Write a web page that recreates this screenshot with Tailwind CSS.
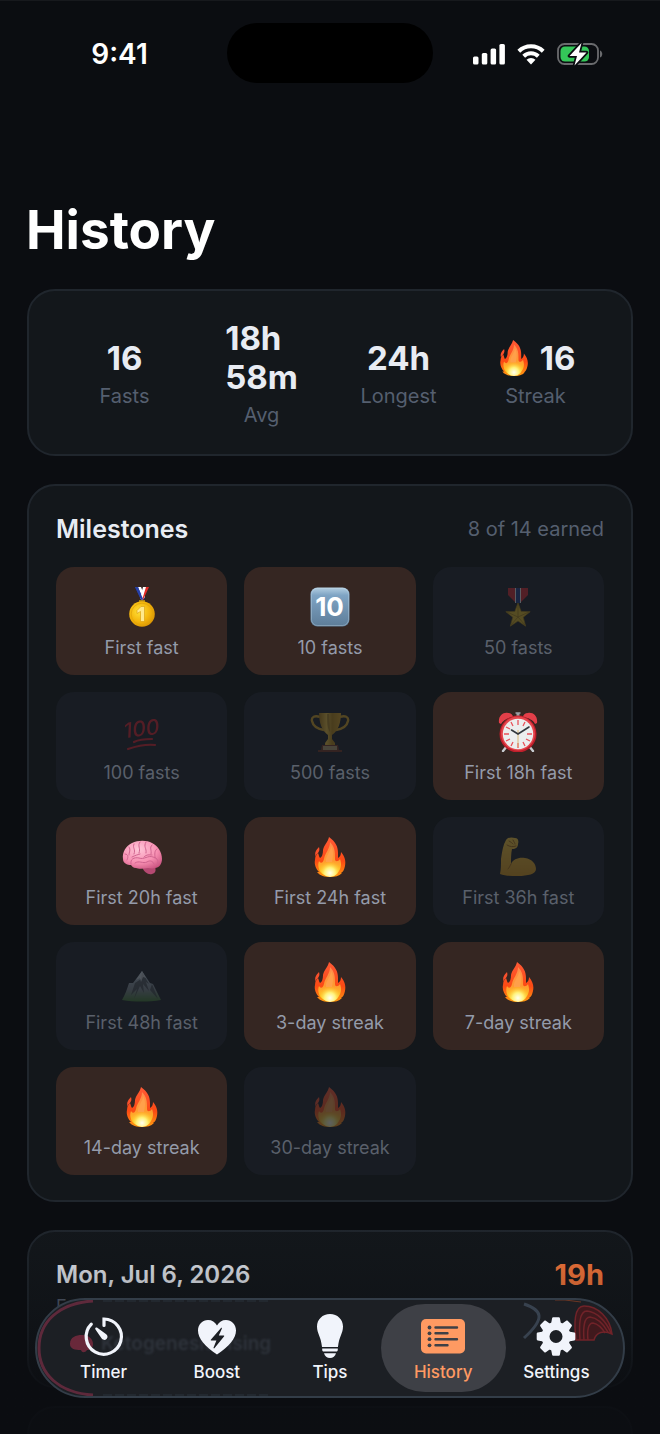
<!DOCTYPE html>
<html lang="en">
<head>
    <meta charset="UTF-8">
    <meta name="viewport" content="width=device-width, initial-scale=1.0">
    <title>History</title>
    <script src="https://cdn.jsdelivr.net/npm/@tailwindcss/browser@4"></script>
</head>
<body class="bg-[#0b0d11] font-['Inter',sans-serif] text-[#e8ecf3]">

    <!-- Shared artwork -->
    <svg class="absolute size-0" aria-hidden="true">
        <defs>
            <linearGradient id="flame-outer" x1="0" y1="0" x2="0" y2="1">
                <stop offset="0" stop-color="#ff5a36"/><stop offset=".6" stop-color="#fb4a14"/><stop offset="1" stop-color="#ff9a10"/>
            </linearGradient>
            <linearGradient id="flame-mid" x1="0" y1="0" x2="0" y2="1">
                <stop offset="0" stop-color="#ff8a50"/><stop offset=".55" stop-color="#ff9a30"/><stop offset="1" stop-color="#ffd51c"/>
            </linearGradient>
            <radialGradient id="flame-core" cx=".5" cy=".8" r=".6">
                <stop offset="0" stop-color="#fffff0"/><stop offset=".45" stop-color="#fff27a"/><stop offset="1" stop-color="#ffc21f" stop-opacity="0"/>
            </radialGradient>
            <radialGradient id="gold" cx=".4" cy=".4" r=".65">
                <stop offset="0" stop-color="#ffe23a"/><stop offset=".6" stop-color="#f4b60c"/><stop offset="1" stop-color="#d99303"/>
            </radialGradient>
            <linearGradient id="keycap" x1="0" y1="0" x2="0" y2="1">
                <stop offset="0" stop-color="#b4cfe2"/><stop offset=".2" stop-color="#7fa4c4"/><stop offset="1" stop-color="#5d7c98"/>
            </linearGradient>
            <linearGradient id="cup" x1="0" y1="0" x2="1" y2="0">
                <stop offset="0" stop-color="#a8770c"/><stop offset=".35" stop-color="#f2c53c"/><stop offset=".6" stop-color="#b98710"/><stop offset="1" stop-color="#e0a820"/>
            </linearGradient>
            <radialGradient id="brain-fill" cx=".4" cy=".3" r=".8">
                <stop offset="0" stop-color="#ffc6d8"/><stop offset=".6" stop-color="#f78fb2"/><stop offset="1" stop-color="#c9527f"/>
            </radialGradient>
            <linearGradient id="arm-fill" x1="0" y1="0" x2="0" y2="1">
                <stop offset="0" stop-color="#ffcf3c"/><stop offset="1" stop-color="#dd9a18"/>
            </linearGradient>
            <linearGradient id="rock" x1="0" y1="0" x2="0" y2="1">
                <stop offset="0" stop-color="#a9bccb"/><stop offset=".6" stop-color="#7f8a92"/><stop offset="1" stop-color="#3f7a2f"/>
            </linearGradient>
        </defs>

        <symbol id="flame" viewBox="0 0 40 40">
            <path fill="url(#flame-outer)" d="M19 0c7 5 9 10 9 16 0 2 0 4 0 5 2-1 3-3 3-6 4 5 5 9 4 14-1 4-2 6-4 7l1 0c-3 3-7 4-12 4s-10-1-13-5l2 0c-3-3-5-8-4-12 0-4 2-6 3-7 1 2 1 4 2 5 2-1 3-4 3-8 1-5 5-8 6-13z"/>
            <path fill="#f9502c" d="M9 10c1 3 0 4-1 6-1 1-2 1-2 4-2-4 0-7 3-10z"/>
            <path fill="url(#flame-mid)" d="M20 5c5 5 5 10 5 17 0 3 3 3 5 0 2 5 1 10-2 13-2 3-5 4-8 4-6 0-10-3-11-7-1-3-1-6 0-8 2 3 4 2 5-2 1-6 6-10 6-17z"/>
            <path fill="#ffa04a" d="M21 9c3 5 2 11 1 16h-6c-1-6 5-10 5-16z"/>
            <ellipse cx="20" cy="30" rx="10" ry="10" fill="url(#flame-core)"/>
        </symbol>

        <symbol id="gold-medal" viewBox="0 0 40 40">
            <path fill="#1f3fa6" d="M13 0h5l5 11-3 3z"/><path fill="#fff" d="M16 0h3l4 10-2 2z"/>
            <path fill="#e32d28" d="M27 0h-5l-4 11 3 2z"/><path fill="#fff" d="M24 0h-3l-3 11 2 2z"/>
            <path fill="#2740a8" d="M13 0h3l5 12-2 1z"/>
            <path fill="none" stroke="#d9a413" stroke-width="1.500" d="M17 14h6"/>
            <circle cx="20" cy="27" r="12.800" fill="url(#gold)"/>
            <circle cx="20" cy="27" r="10.800" fill="none" stroke="#e0a50a" stroke-width=".8"/>
            <path d="M15 23.500l4-4h3.500v15h-4v-10l-3.500 2z" fill="#ffe98c" stroke="#d69a0a" stroke-width=".6"/>
        </symbol>

        <symbol id="keycap-ten" viewBox="0 0 40 40">
            <rect x=".5" y=".5" width="39" height="39" rx="7" fill="url(#keycap)"/>
            <rect x="1.500" y="1.500" width="37" height="37" rx="6" fill="none" stroke="#c6dceb" stroke-opacity=".35"/>
            <text x="19.500" y="29" text-anchor="middle" font-family="Inter, sans-serif" font-weight="700" font-size="26" fill="#fff">10</text>
        </symbol>

        <symbol id="service-medal" viewBox="0 0 40 40">
            <path fill="#d9262d" d="M10 1h20v7l-8 8h-4l-8-8z"/>
            <path fill="#f1f1f1" d="M17 1h6v15h-6z"/><path fill="#1f3d8c" d="M18 1h4v15h-4z"/>
            <path fill="#e3bb23" stroke="#a98410" stroke-width=".7" d="M20 16l3.200 8.500 9 .2-7 5.500 2.500 9L20 34l-7.700 5.200 2.500-9-7-5.500 9-.2z"/>
            <path fill="none" stroke="#9a7510" stroke-width=".7" d="M20 17v13M31 25l-11 5M27 38l-7-8M13 38l7-8M9 25l11 5"/>
        </symbol>

        <symbol id="hundred" viewBox="0 0 40 40">
            <text x="2" y="24" transform="rotate(-7 20 20)" font-family="Inter, sans-serif" font-style="italic" font-weight="500" font-size="21" fill="#e0202c">100</text>
            <path fill="none" stroke="#e0202c" stroke-width="2.200" stroke-linecap="round" d="M12 30c6-3 12-3 18-3M6 37c9-3 18-5 27-4"/>
        </symbol>

        <symbol id="trophy" viewBox="0 0 40 40">
            <path fill="none" stroke="#d9a520" stroke-width="2.400" d="M10 5C5 3 1 5 2 9c1 5 6 8 12 9M30 5c5-2 9 0 8 4-1 5-6 8-12 9"/>
            <path fill="url(#cup)" d="M9 1h22c0 10-3 18-9 22v4l3 4v2H15v-2l3-4v-4C12 19 9 11 9 1z"/>
            <path fill="#6d4a08" fill-opacity=".4" d="M17 2h2l1 18c-3-4-3-10-3-18z"/>
            <path fill="#76351f" d="M12 33h16l1 5h3v2H8v-2h3z"/><path fill="#b6a170" d="M13 34h14v4H13z"/>
        </symbol>

        <symbol id="alarm" viewBox="0 0 40 40">
            <path stroke="#c8ccd0" stroke-width="2.400" stroke-linecap="round" d="M9 34l-4 5M31 34l4 5"/>
            <path stroke="#9da1a7" stroke-width="3" d="M20 1v4"/><path stroke="#9da1a7" stroke-width="1.500" d="M17.500 1h5"/>
            <path fill="#e33f49" d="M1 11C0 4 5 0 10 1c3 0 5 2 5 4C9 6 5 8 3 12zM39 11c1-7-4-11-9-10-3 0-5 2-5 4 6 1 10 3 12 7z"/>
            <circle cx="20" cy="22" r="18.500" fill="#bf1f2b"/><circle cx="20" cy="21.500" r="17" fill="#e5464d"/>
            <circle cx="20" cy="22" r="15.200" fill="#eceeee"/>
            <g stroke="#e8525a" stroke-width="1.300">
                <path d="M20 8v5M20 31v5M6 22h5M29 22h5M13 10l2 4M25 30l2 4M8 15l4 2M28 27l4 2M27 10l-2 4M15 30l-2 4M8 29l4-2"/>
            </g>
            <path stroke="#d8b46c" stroke-width=".9" d="M20 18v17"/>
            <path fill="none" stroke="#33383d" stroke-width="1.600" stroke-linecap="round" d="M13.500 18l6.500 4 11-7"/>
        </symbol>

        <symbol id="brain" viewBox="0 0 40 40">
            <path fill="#b54972" d="M20 30c2 5 6 8 10 7 4-1 4-4 3-8z"/>
            <path fill="url(#brain-fill)" d="M1 22C0 15 4 9 10 6c6-3 15-3 20 0 6 3 10 9 10 16 0 5-3 9-7 9-3 1-5 0-7 0-5 1-10 1-12 0-3 0-4-2-5-3-4 0-8-2-8-6z"/>
            <g fill="none" stroke="#d0648f" stroke-width="1" stroke-linecap="round">
                <path d="M7 10c2 3 0 5 0 8M12 7c-2 4 2 5 0 10M18 5c-3 4 1 6-1 11M24 5c-3 5 1 6 0 11M30 8c-3 3 0 5-1 9M35 12c-3 2-2 5-2 9M3 17c4 0 3 4 2 6"/>
                <path d="M9 27c-1-5 3-7 8-6 5 2 9-3 14-1 5 1 6 5 4 8M13 26c4-3 8 1 12-1 3-2 6-1 7 2M10 20c4-2 5-2 8-3M22 20c3-3 5-2 8-2"/>
            </g>
        </symbol>

        <symbol id="biceps" viewBox="0 0 40 40">
            <path fill="url(#arm-fill)" d="M8 3c2-3 6-3 9-2 3 0 4 3 3 6 0 3-2 5-6 5-1 5-1 9-1 15 2-5 8-7 14-6 7 1 11 6 11 11 0 5-8 7-18 7-6 0-13 0-18-2 1-5 1-9 1-15C4 15 5 8 8 3z"/>
            <path fill="none" stroke="#a96b10" stroke-width="1" stroke-linecap="round" d="M11 4c2 1 3 2 4 3M15 3c1 2 2 3 2 4M9 8c3 2 6 2 9 1M13 27c-1 2-2 4-3 5"/>
        </symbol>

        <symbol id="mountain" viewBox="0 0 40 40">
            <path fill="url(#rock)" d="M0 38c3-5 5-11 7-17h4l9-12 8 12 3 1 8 16c-12 2-27 2-39 0z"/>
            <path fill="#30363a" fill-opacity=".65" d="M20 10l7 12-3-2 3 9-6-7 1 9-4-7-6 13 3-10-6 6 4-12 6-4zM30 22l6 15-8-9z"/>
            <path fill="#dfe8ee" fill-opacity=".7" d="M20 9l4 7-3-1-2 5-1-4-4 2z"/>
        </symbol>
    </svg>

    <div class="relative h-screen overflow-hidden border-t border-[#17191d]">

        <!-- Status bar -->
        <div class="grid grid-cols-[1fr_206px_1fr] items-center pt-[22px]">
            <div class="pt-0.5 pl-3 text-center text-[28px] font-semibold text-white">9:41</div>
            <div class="h-15 rounded-full bg-black"></div>
            <div class="flex items-center justify-center gap-3 pt-0.5 pr-[18px]">
                <svg class="h-[22px] w-8" viewBox="0 0 32 22" fill="#fff" aria-hidden="true">
                    <rect x="0" y="13.500" width="5.500" height="8" rx="1.500"/><rect x="8.800" y="10" width="5.500" height="11.500" rx="1.500"/>
                    <rect x="17.600" y="5.500" width="5.500" height="16" rx="1.500"/><rect x="26.400" y="1" width="5.500" height="20.500" rx="1.500"/>
                </svg>
                <svg class="h-[22px] w-7" viewBox="0 0 28 22" aria-hidden="true">
                    <g fill="none" stroke="#fff" stroke-width="4"><path d="M1.800 8.200a17.500 17.500 0 0 1 24.400 0"/><path d="M6.700 13.200a10.500 10.500 0 0 1 14.600 0"/></g>
                    <path fill="#fff" d="M9.500 16.800a6.500 6.500 0 0 1 9 0L14 21.500z"/>
                </svg>
                <svg class="h-6 w-[46px]" viewBox="0 0 46 24" aria-hidden="true">
                    <rect x="1" y="2" width="40" height="20" rx="6.500" fill="none" stroke="#6a6b6e" stroke-width="1.800"/>
                    <path fill="#6a6b6e" d="M43 8.500c3 1 3 6 0 7z"/>
                    <rect x="3.500" y="4.500" width="28.500" height="15" rx="4.500" fill="#34c759"/>
                    <path d="M24.500 1L12.500 14h7.500l-2.500 9.500L29.500 10.500h-7.500z" fill="#fff" stroke="#0b0d11" stroke-width="3.500" paint-order="stroke" stroke-linejoin="round"/>
                </svg>
            </div>
        </div>

        <h1 class="mt-[115px] px-[26px] text-[53px] leading-16 font-bold text-white">History</h1>

        <main class="mt-[27px] flex flex-col gap-7 px-[27px]">

            <!-- Totals -->
            <section class="rounded-[28px] border-2 border-[#20262d] bg-[#13171b] px-[27px] pt-7 pb-[27px]">
                <dl class="grid grid-cols-4 items-center">
                    <div class="flex flex-col-reverse items-center gap-1.5">
                        <dt class="text-xl leading-6 text-[#555f6f]">Fasts</dt>
                        <dd class="text-[33px] leading-[39px] font-bold">16</dd>
                    </div>
                    <div class="flex flex-col-reverse items-center gap-1.5">
                        <dt class="text-xl leading-6 text-[#555f6f]">Avg</dt>
                        <dd class="text-[33px] leading-[39px] font-bold">18h<br>58m</dd>
                    </div>
                    <div class="flex flex-col-reverse items-center gap-1.5">
                        <dt class="text-xl leading-6 text-[#555f6f]">Longest</dt>
                        <dd class="text-[33px] leading-[39px] font-bold">24h</dd>
                    </div>
                    <div class="flex flex-col-reverse items-center gap-1.5">
                        <dt class="text-xl leading-6 text-[#555f6f]">Streak</dt>
                        <dd class="flex items-center gap-2 text-[33px] leading-[39px] font-bold">
                            <svg class="size-9" aria-hidden="true"><use href="#flame"/></svg>16
                        </dd>
                    </div>
                </dl>
            </section>

            <!-- Milestones -->
            <section class="rounded-[28px] border-2 border-[#20262d] bg-[#13171b] px-[27px] pt-[27px] pb-[25px]">
                <div class="mb-[22px] flex items-center justify-between">
                    <h2 class="text-[25px] leading-8 font-semibold">Milestones</h2>
                    <p class="text-xl leading-8 text-[#555f6f]">8 of 14 earned</p>
                </div>
                <ul class="grid grid-cols-3 gap-[17px] text-lg leading-6 text-[#949baa]">
                    <li class="flex flex-col items-center gap-[9px] rounded-[18px] bg-[#352622] pt-5 pb-[15px]">
                        <svg class="size-10" aria-hidden="true"><use href="#gold-medal"/></svg>First fast
                    </li>
                    <li class="flex flex-col items-center gap-[9px] rounded-[18px] bg-[#352622] pt-5 pb-[15px]">
                        <svg class="size-10" aria-hidden="true"><use href="#keycap-ten"/></svg>10 fasts
                    </li>
                    <li class="flex flex-col items-center gap-[9px] rounded-[18px] bg-[#181c23] pt-5 pb-[15px] text-[#5a606b]">
                        <svg class="size-10 opacity-30" aria-hidden="true"><use href="#service-medal"/></svg>50 fasts
                    </li>
                    <li class="flex flex-col items-center gap-[9px] rounded-[18px] bg-[#181c23] pt-5 pb-[15px] text-[#5a606b]">
                        <svg class="size-10 opacity-30" aria-hidden="true"><use href="#hundred"/></svg>100 fasts
                    </li>
                    <li class="flex flex-col items-center gap-[9px] rounded-[18px] bg-[#181c23] pt-5 pb-[15px] text-[#5a606b]">
                        <svg class="size-10 opacity-30" aria-hidden="true"><use href="#trophy"/></svg>500 fasts
                    </li>
                    <li class="flex flex-col items-center gap-[9px] rounded-[18px] bg-[#352622] pt-5 pb-[15px]">
                        <svg class="size-10" aria-hidden="true"><use href="#alarm"/></svg>First 18h fast
                    </li>
                    <li class="flex flex-col items-center gap-[9px] rounded-[18px] bg-[#352622] pt-5 pb-[15px]">
                        <svg class="size-10" aria-hidden="true"><use href="#brain"/></svg>First 20h fast
                    </li>
                    <li class="flex flex-col items-center gap-[9px] rounded-[18px] bg-[#352622] pt-5 pb-[15px]">
                        <svg class="size-10" aria-hidden="true"><use href="#flame"/></svg>First 24h fast
                    </li>
                    <li class="flex flex-col items-center gap-[9px] rounded-[18px] bg-[#181c23] pt-5 pb-[15px] text-[#5a606b]">
                        <svg class="size-10 opacity-30" aria-hidden="true"><use href="#biceps"/></svg>First 36h fast
                    </li>
                    <li class="flex flex-col items-center gap-[9px] rounded-[18px] bg-[#181c23] pt-5 pb-[15px] text-[#5a606b]">
                        <svg class="size-10 opacity-30" aria-hidden="true"><use href="#mountain"/></svg>First 48h fast
                    </li>
                    <li class="flex flex-col items-center gap-[9px] rounded-[18px] bg-[#352622] pt-5 pb-[15px]">
                        <svg class="size-10" aria-hidden="true"><use href="#flame"/></svg>3-day streak
                    </li>
                    <li class="flex flex-col items-center gap-[9px] rounded-[18px] bg-[#352622] pt-5 pb-[15px]">
                        <svg class="size-10" aria-hidden="true"><use href="#flame"/></svg>7-day streak
                    </li>
                    <li class="flex flex-col items-center gap-[9px] rounded-[18px] bg-[#352622] pt-5 pb-[15px]">
                        <svg class="size-10" aria-hidden="true"><use href="#flame"/></svg>14-day streak
                    </li>
                    <li class="flex flex-col items-center gap-[9px] rounded-[18px] bg-[#181c23] pt-5 pb-[15px] text-[#5a606b]">
                        <svg class="size-10 opacity-30" aria-hidden="true"><use href="#flame"/></svg>30-day streak
                    </li>
                </ul>
            </section>

            <!-- Log -->
            <section class="flex flex-col gap-[18px]">
                <article class="h-[158px] rounded-[28px] border-2 border-[#20262d] bg-[#13171b] p-[27px]">
                    <div class="flex items-center justify-between">
                        <h3 class="text-2xl leading-8 font-semibold">Mon, Jul 6, 2026</h3>
                        <p class="text-[29px] leading-8 font-bold text-[#ff7a3c]">19h</p>
                    </div>
                    <p class="mt-1 text-lg leading-6 text-[#555f6f]">F</p>
                </article>
                <article class="h-[158px] rounded-[28px] border-2 border-[#20262d] bg-[#13171b]"></article>
            </section>
        </main>

        <!-- Bottom fade -->
        <div class="pointer-events-none absolute inset-x-0 bottom-0 h-[210px] bg-linear-to-b from-[#0b0d11]/0 via-[#0b0d11]/35 via-45% to-[#0b0d11]/90 to-80%"></div>

        <!-- Tab bar -->
        <nav class="absolute inset-x-[35px] bottom-9 flex overflow-hidden rounded-full border-2 border-[#333d48] bg-[#1c1f24] px-[10px] py-1 text-[17px] leading-5 font-medium text-[#f1f4fb]">
            <svg class="absolute top-0 left-0 h-24 w-60" viewBox="0 0 240 96" fill="none" aria-hidden="true">
                <path stroke="#6a2c40" stroke-width="3" stroke-opacity=".85" d="M56 1C22 3 2 22 2 48s20 45 54 47"/>
                <path fill="#7d2a40" fill-opacity=".8" d="M33 44c0-7 6-9 12-9 7 0 11 4 11 9 0 4-3 6-6 6-2 3-5 3-6 0-6 0-11-1-11-6z"/>
                <path stroke="#22282f" stroke-width="2" stroke-dasharray="9 3" d="M66 1h166M66 95h166"/>
            </svg>
            <span class="absolute top-8 left-16 text-[19px] leading-6 font-semibold text-[#2e333b] blur-[1px]" aria-hidden="true">Ketogenesis rising</span>
            <svg class="absolute top-0 right-0 h-24 w-28" viewBox="0 0 112 96" fill="none" aria-hidden="true">
                <path stroke="#38424f" stroke-width="3" d="M13 4c18 6 22 14 0 34"/>
                <path fill="#40191d" stroke="#702329" stroke-width="1.500" d="M65 40c-2-16-2-34 8-34 14 0 26 12 28 28-8-4-16-2-18 6z"/>
                <path stroke="#702329" stroke-width="1.500" d="M69 40c-1-14-1-29 7-29 10 1 19 10 24 22M73 40c-1-12 0-23 6-23 8 1 14 8 18 15M77 40c-1-9 0-17 5-17 5 1 9 5 12 10"/>
                <path stroke="#a24824" stroke-opacity=".6" d="M44 0h10l16 2"/>
            </svg>

            <button type="button" class="relative -mx-1.5 flex h-22 flex-1 flex-col items-center gap-1 rounded-full pt-2.5">
                <svg class="size-11" viewBox="0 0 44 44" fill="none" stroke="#f1f4fb" stroke-width="3.200" stroke-linecap="round" aria-hidden="true">
                    <path d="M9.300 10.200A17.600 17.600 0 1 0 22 5v6.500"/>
                    <path fill="#f1f4fb" stroke="none" d="M13.400 14c.5-.6 1.200-.6 1.900-.2l8.600 6.100a3.200 3.200 0 1 1-4.400 4.300l-6-8.600c-.4-.6-.5-1.100-.1-1.600z"/>
                </svg>
                Timer
            </button>
            <button type="button" class="relative -mx-1.5 flex h-22 flex-1 flex-col items-center gap-1 rounded-full pt-2.5">
                <svg class="size-11" viewBox="0 0 44 44" aria-hidden="true">
                    <path fill="#f1f4fb" d="M22 40.500C10 32.500 3 24.500 3 16.500 3 10.500 7.500 6 13 6c4 0 7 2 9 5.500C24 8 27 6 31 6c5.500 0 10 4.500 10 10.500 0 8-7 16-19 24z"/>
                    <path fill="#1c1f24" d="M26 14L16 25.500c-.4.500-.2 1 .4 1h5l-2.800 7c-.3.800.4 1.200 1 .6L29 22.500c.4-.5.2-1-.4-1h-4.800l3-6.800c.3-.8-.2-1.300-.8-.7z"/>
                </svg>
                Boost
            </button>
            <button type="button" class="relative -mx-1.5 flex h-22 flex-1 flex-col items-center gap-1 rounded-full pt-2.5">
                <svg class="size-11" viewBox="0 0 44 44" fill="#f1f4fb" aria-hidden="true">
                    <path d="M22 0c7.500 0 13 5.500 13 12.500 0 7-4 10-5 20.500H14C13 22.500 9 19.500 9 12.500 9 5.500 14.500 0 22 0z"/>
                    <path d="M14.200 34.500h15.600v1.200c0 1-.6 1.800-1.500 1.800H15.700c-.9 0-1.500-.8-1.500-1.800zM16 39.200h12c-.8 3-3 4.800-6 4.800s-5.200-1.800-6-4.800z"/>
                </svg>
                Tips
            </button>
            <button type="button" aria-current="page" class="relative -mx-1.5 flex h-22 flex-1 flex-col items-center gap-1 rounded-full bg-[#3e4046] pt-2.5 text-[#ff9a62]">
                <svg class="size-11" viewBox="0 0 44 44" aria-hidden="true">
                    <rect x="0" y="5" width="44" height="34.500" rx="5" fill="#ff9a62"/>
                    <g fill="#3e4046"><circle cx="8.500" cy="13.500" r="1.900"/><circle cx="8.500" cy="19.300" r="1.900"/><circle cx="8.500" cy="25.200" r="1.900"/><circle cx="8.500" cy="31.300" r="1.900"/></g>
                    <path fill="none" stroke="#3e4046" stroke-width="2.400" stroke-linecap="round" d="M14.500 13.500h21.500M14.500 19.300H26.500M14.500 25.200h21.500M14.500 31.300H26.500"/>
                </svg>
                History
            </button>
            <button type="button" class="relative -mx-1.5 flex h-22 flex-1 flex-col items-center gap-1 rounded-full pt-2.5">
                <svg class="size-11" viewBox="0 0 44 44" aria-hidden="true">
                    <g fill="#f1f4fb">
                        <path id="tooth" d="M19.200 3.200h5.600c.6 0 1 .4 1.100 1L27 10H17l1.100-5.800c.1-.6.500-1 1.100-1z"/>
                        <use href="#tooth" transform="rotate(45 22 22.500)"/><use href="#tooth" transform="rotate(90 22 22.500)"/>
                        <use href="#tooth" transform="rotate(135 22 22.500)"/><use href="#tooth" transform="rotate(180 22 22.500)"/>
                        <use href="#tooth" transform="rotate(225 22 22.500)"/><use href="#tooth" transform="rotate(270 22 22.500)"/>
                        <use href="#tooth" transform="rotate(315 22 22.500)"/>
                    </g>
                    <circle cx="22" cy="22.500" r="10.500" fill="none" stroke="#f1f4fb" stroke-width="8"/>
                </svg>
                Settings
            </button>
        </nav>
    </div>

</body>
</html>
